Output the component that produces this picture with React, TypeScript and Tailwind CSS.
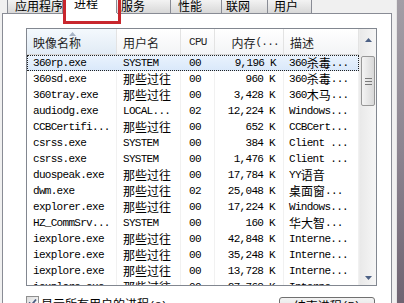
import React from 'react';

const mono = "font-['Liberation_Mono','Noto_Sans_CJK_SC',monospace] text-[11px] tracking-[-0.7px]";
const cjk = "font-['Noto_Sans_CJK_SC','Noto_Sans',sans-serif] text-[12px] tracking-[0px]";

// SimSun style: half-width latin, full-width hanzi
const Mix = ({ t }: { t: string }) => (
  <>
    {(t.match(/[\x00-\x7f]+|[^\x00-\x7f]+/g) || []).map((s, i) => (
      <span key={i} className={/^[\x00-\x7f]/.test(s) ? mono : cjk}>
        {s}
      </span>
    ))}
  </>
);

const tabs = [
  { label: '应用程序', w: 'w-[56px]', pl: 'pl-[7px]' },
  { label: '进程', w: 'w-[55px]', pl: 'pl-[11px]', active: true },
  { label: '服务', w: 'w-[55px]', pl: 'pl-[4px]' },
  { label: '性能', w: 'w-[52px]', pl: 'pl-[7px]' },
  { label: '联网', w: 'w-[47px]', pl: 'pl-[4px]' },
  { label: '用户', w: 'w-[45px]', pl: 'pl-[6px]' },
];

const rows = [
  ['360rp.exe', 'SYSTEM', '00', '9,196 K', '360杀毒...'],
  ['360sd.exe', '那些过往', '00', '960 K', '360杀毒...'],
  ['360tray.exe', '那些过往', '00', '3,428 K', '360木马...'],
  ['audiodg.exe', 'LOCAL...', '02', '12,224 K', 'Windows...'],
  ['CCBCertifi...', '那些过往', '00', '652 K', 'CCBCert...'],
  ['csrss.exe', 'SYSTEM', '00', '384 K', 'Client ...'],
  ['csrss.exe', 'SYSTEM', '00', '1,476 K', 'Client ...'],
  ['duospeak.exe', '那些过往', '00', '17,784 K', 'YY语音'],
  ['dwm.exe', '那些过往', '02', '25,048 K', '桌面窗...'],
  ['explorer.exe', '那些过往', '00', '17,224 K', 'Windows...'],
  ['HZ_CommSrv...', 'SYSTEM', '00', '160 K', '华大智...'],
  ['iexplore.exe', '那些过往', '00', '42,848 K', 'Interne...'],
  ['iexplore.exe', '那些过往', '00', '35,248 K', 'Interne...'],
  ['iexplore.exe', '那些过往', '00', '13,728 K', 'Interne...'],
  ['iexplore.exe', '那些过往', '00', '27,768 K', 'Interne...'],
];

const cols = [
  { w: 'w-[90px] shrink-0', cell: 'pl-[6px]' },
  { w: 'w-[64px] shrink-0', cell: 'pl-[6px]' },
  { w: 'w-[34px] shrink-0', cell: 'pl-[8px]' },
  { w: 'w-[69px] shrink-0', cell: 'justify-end pr-[8px]' },
  { w: 'flex-1', cell: 'pl-[5px]' },
];

const headers = ['映像名称', '用户名', 'CPU', '内存(...', '描述'];

function Arrow({ down }: { down?: boolean }) {
  return (
    <svg width="7" height="4" viewBox="0 0 7 4">
      <path d={down ? 'M0 0 H7 L3.5 4 Z' : 'M0 4 H7 L3.5 0 Z'} fill="#4d6185" />
    </svg>
  );
}

function Scrollbar() {
  return (
    <div className="w-[17px] shrink-0 flex flex-col bg-gradient-to-r from-[#e9e9e9] to-[#f6f6f6] border-l border-[#ececec]">
      <div className="h-[22px] flex items-end justify-center pb-[9px]">
        <Arrow />
      </div>
      <div className="mt-[5px] mx-[1px] h-[50px] rounded-[2px] border border-[#979797] bg-gradient-to-r from-[#f4f4f4] to-[#d9d9d9] flex flex-col items-center justify-center gap-[2px]">
        <div className="w-[7px] h-px bg-[#7a7a7a]" />
        <div className="w-[7px] h-px bg-[#7a7a7a]" />
        <div className="w-[7px] h-px bg-[#7a7a7a]" />
      </div>
      <div className="flex-1" />
      <div className="h-[17px] flex items-start justify-center pt-[8px]">
        <Arrow down />
      </div>
    </div>
  );
}

function ProcessList() {
  return (
    <div className="w-[351px] h-[258px] shrink-0 border border-[#828790] flex bg-white overflow-hidden">
      <div className="flex-1 flex flex-col overflow-hidden">
        <div className="h-[26px] flex border-b border-[#d5d5d5] shrink-0">
          {headers.map((h, i) => (
            <div
              key={h}
              className={`${cols[i].w} relative flex items-center pt-[2px] border-r border-[#e3e3e3] ${
                i === 0 ? 'bg-gradient-to-b from-[#f4f9fd] to-[#e1ebf5]' : 'bg-gradient-to-b from-white to-[#f3f4f6]'
              } ${i === 3 ? 'justify-end pr-[4px]' : i === 2 ? 'pl-[8px]' : 'pl-[6px]'} text-[#1e1e1e] whitespace-nowrap`}
            >
              {i === 0 && (
                <div className="absolute top-[3px] left-[42px]">
                  <svg width="7" height="4" viewBox="0 0 7 4">
                    <path d="M0 4 H7 L3.5 0 Z" fill="#a7b4c6" />
                  </svg>
                </div>
              )}
              <Mix t={h} />
            </div>
          ))}
        </div>
        {rows.map((r, ri) => (
          <div
            key={ri}
            className={`h-[16px] shrink-0 flex leading-[16px] text-black ${
              ri === 0 ? 'bg-gradient-to-b from-[#eaf3fd] to-[#d9e8fa] outline outline-1 outline-dotted outline-[#222] -outline-offset-1' : ''
            }`}
          >
            {r.map((c, ci) => (
              <div
                key={ci}
                className={`${cols[ci].w} ${cols[ci].cell} flex whitespace-nowrap overflow-hidden ${
                  ri === 0 ? '' : 'border-r border-[#f1f1f1]'
                }`}
              >
                <Mix t={c} />
              </div>
            ))}
          </div>
        ))}
      </div>
      <Scrollbar />
    </div>
  );
}

export default function App() {
  return (
    <div className="w-[404px] h-[303px] overflow-hidden flex bg-[#f0f0f0] relative">
      <div className="w-[396px] flex flex-col">
        <div className="h-[13px] pl-[7px] flex items-start relative z-10 shrink-0">
          {tabs.map((t) => (
            <div
              key={t.label}
              className={`${t.w} ${t.pl} shrink-0 flex items-end whitespace-nowrap border-l border-r border-[#898c95] -mr-px ${
                t.active
                  ? 'h-[14px] bg-white pb-[5px] border-r-0'
                  : 'h-[13px] bg-gradient-to-b from-[#f3f3f3] to-[#d8d8d8] pb-[1px]'
              }`}
            >
              <span className="leading-[12px] text-black whitespace-nowrap">
                <Mix t={t.label} />
              </span>
            </div>
          ))}
        </div>
        <div className="ml-[2px] w-[390px] flex-1 border-l border-r border-t border-[#898c95] bg-white pt-[14px] pl-[23px] flex flex-col">
          <ProcessList />
          <div className="flex mt-[9px] items-start">
            <div className="mt-[1px] w-[13px] h-[13px] border border-[#8f8f8f] bg-gradient-to-br from-[#dcdcdc] to-white flex items-center justify-center">
              <svg width="9" height="9" viewBox="0 0 9 9">
                <path d="M1 4.5 L3.5 7 L8 1.5" stroke="#4a5b80" strokeWidth="1.8" fill="none" />
              </svg>
            </div>
            <div className="ml-[2px] mt-[1px] leading-[14px] text-black whitespace-nowrap">
              <Mix t="显示所有用户的进程(S)" />
            </div>
            <div className="ml-[112px] mt-[2px] w-[96px] h-[22px] rounded-[3px] border border-[#707070] bg-gradient-to-b from-[#f2f2f2] to-[#dcdcdc] flex justify-center pt-[1px] leading-[14px] text-black whitespace-nowrap">
              <Mix t="结束进程(E)" />
            </div>
          </div>
        </div>
      </div>
      <div className="w-[8px] border-l border-[#e4e4e4] bg-gradient-to-b from-[#a39ea6] via-[#8c8490] to-[#6f6472]" />
      <div className="absolute left-[63px] top-[-4px] w-[58px] h-[28px] border-[3px] border-[#c8262d] z-20" />
    </div>
  );
}
